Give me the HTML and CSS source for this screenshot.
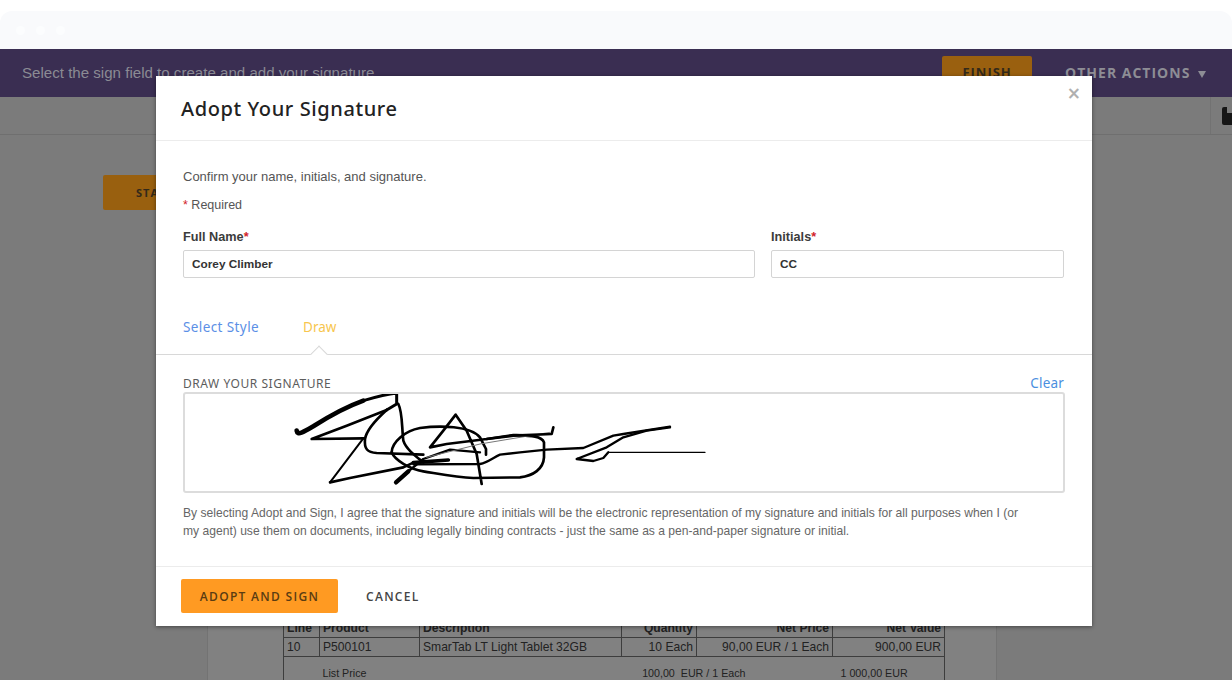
FILE: index.html
```html
<!DOCTYPE html>
<html lang="en">
<head>
    <meta charset="UTF-8">
    <meta name="viewport" content="width=device-width, initial-scale=1.0">
    <title>Adopt Your Signature</title>
    <link rel="stylesheet" href="styles.css">
</head>
<body>
    <div class="window-bar">
        <span class="dot"></span>
        <span class="dot"></span>
        <span class="dot"></span>
    </div>

    <div class="page-shell">
        <div class="action-bar">
            <span class="action-text">Select the sign field to create and add your signature</span>
            <span class="finish-btn">FINISH</span>
            <span class="other-actions">OTHER ACTIONS <span class="caret"></span></span>
        </div>
        <div class="tool-bar">
            <div class="tool-cell">
                <svg class="save-icon" width="18" height="18" viewBox="0 0 18 18">
                    <path d="M2 0h12l4 4v12a2 2 0 0 1-2 2H2a2 2 0 0 1-2-2V2a2 2 0 0 1 2-2z" fill="#161616"/>
                    <path d="M5 0h6v6H5z" fill="#7b7b7b"/>
                </svg>
            </div>
        </div>
        <div class="doc-area">
            <span class="start-tag">START</span>
            <div class="doc-page">
                <table class="items">
                    <tr>
                        <th class="col-line">Line</th>
                        <th class="col-product">Product</th>
                        <th class="col-desc">Description</th>
                        <th class="col-qty num">Quantity</th>
                        <th class="col-price num">Net Price</th>
                        <th class="col-value num">Net Value</th>
                    </tr>
                    <tr>
                        <td>10</td>
                        <td>P500101</td>
                        <td>SmarTab LT Light Tablet 32GB</td>
                        <td class="num">10 Each</td>
                        <td class="num">90,00 EUR / 1 Each</td>
                        <td class="num">900,00 EUR</td>
                    </tr>
                    <tr class="detail">
                        <td></td>
                        <td colspan="2">List Price</td>
                        <td colspan="2" class="detail-price">100,00 &nbsp;EUR / 1 Each</td>
                        <td class="detail-value">1 000,00 EUR</td>
                    </tr>
                </table>
            </div>
        </div>
    </div>

    <div class="sign-dialog">
        <div class="dialog-head">
            <h1>Adopt Your Signature</h1>
            <span class="close-x">×</span>
        </div>
        <div class="dialog-body">
            <p class="intro">Confirm your name, initials, and signature.</p>
            <p class="required"><span class="star">*</span> Required</p>
            <div class="name-fields">
                <div class="field">
                    <label for="fullName">Full Name<span class="star">*</span></label>
                    <input type="text" id="fullName" value="Corey Climber">
                </div>
                <div class="field">
                    <label for="initials">Initials<span class="star">*</span></label>
                    <input type="text" id="initials" value="CC">
                </div>
            </div>
        </div>
        <div class="tabs">
            <span class="tab">Select Style</span>
            <span class="tab active">Draw</span>
        </div>
        <div class="draw-section">
            <div class="draw-head">
                <span class="draw-label">DRAW YOUR SIGNATURE</span>
                <span class="clear">Clear</span>
            </div>
            <div class="sign-pad">
                <svg class="signature" width="440" height="110" viewBox="0 0 1320 330" fill="none" stroke="#000" stroke-linecap="round" stroke-linejoin="round">
                    <path stroke-width="14" d="M50 140 C52 155 70 145 100 127 C150 95 200 68 250 50"/>
                    <path stroke-width="9" d="M250 50 C290 38 320 30 350 27 L350 60 L320 78"/>
                    <path stroke-width="8" d="M320 78 L200 125 L95 165 L250 163"/>
                    <path stroke-width="6" d="M250 163 L150 295"/>
                    <path stroke-width="8" d="M150 295 L210 282 L370 250 L400 236"/>
                    <path stroke-width="8" d="M355 60 C368 85 365 130 370 170 C378 195 405 215 430 235"/>
                    <path stroke-width="8" d="M320 78 C290 105 260 135 255 165 C252 195 262 205 290 207 L430 212"/>
                    <path stroke-width="8" d="M335 205 C335 175 375 140 420 132 C480 124 570 125 600 160 L618 195 L618 212"/>
                    <path stroke-width="8" d="M335 205 C345 230 390 255 430 262 C480 270 530 280 580 282 L720 280 C760 275 790 255 792 220 L792 175 C785 155 750 155 700 153 L620 165 L500 180 L450 190 L490 140 L527 92 L560 140 L590 210 L605 300"/>
                    <path stroke-width="13" d="M348 295 L385 262"/>
                    <path stroke-width="7" d="M385 262 L430 225 L510 197 L600 205"/>
                    <path stroke-width="11" d="M400 236 L505 228"/>
                    <path stroke-width="7" d="M400 241 L600 240 C625 235 640 220 660 212 L720 205 L800 197 L910 192 L1000 155 L1030 150 L1170 128"/>
                    <path stroke="#777" stroke-width="3" d="M440 220 L600 180 L810 145"/>
                    <path stroke-width="8" d="M620 165 L700 155 L815 150 L820 130"/>
                    <path stroke-width="7" d="M1170 130 L1100 140 L1030 160 L980 190 L890 225 L940 231 L970 222 L985 205"/>
                    <path stroke-width="4" d="M985 205 L1275 205"/>
                </svg>
            </div>
            <p class="legal">By selecting Adopt and Sign, I agree that the signature and initials will be the electronic representation of my signature and initials for all purposes when I (or my agent) use them on documents, including legally binding contracts - just the same as a pen-and-paper signature or initial.</p>
        </div>
        <div class="dialog-foot">
            <button type="button" class="adopt-btn">ADOPT AND SIGN</button>
            <button type="button" class="cancel-btn">CANCEL</button>
        </div>
    </div>
</body>
</html>
```

FILE: styles.css
```css
body {
    margin: 0;
    background-color: #fff;
    font-family: "Liberation Sans", Arial, sans-serif;
    color: #333;
}

/* browser bar */
.window-bar {
    height: 38px;
    margin-top: 11px;
    padding-left: 16px;
    display: flex;
    align-items: center;
    gap: 11px;
    background-color: #f9fafc;
    border-radius: 12px 12px 0 0;
}

.dot {
    width: 9px;
    height: 9px;
    border-radius: 50%;
    background-color: #fcfdfe;
}

/* dimmed page */
.page-shell {
    height: 631px;
    display: flex;
    flex-direction: column;
    background-color: #7b7b7b;
    overflow: hidden;
}

.action-bar {
    height: 48px;
    flex-shrink: 0;
    display: flex;
    align-items: center;
    padding: 0 0 2px 22px;
    background-color: #3a2e52;
    box-sizing: border-box;
}

.action-text {
    flex: 1;
    font-size: 15.1px;
    color: #8b8b94;
}

.finish-btn {
    width: 90px;
    height: 33px;
    margin-right: 33px;
    line-height: 33px;
    border-radius: 2px;
    background-color: #9a600f;
    color: #33291a;
    font-family: "Open Sans", sans-serif;
    font-size: 13px;
    font-weight: 700;
    letter-spacing: 1px;
    text-align: center;
}

.other-actions {
    margin-right: 26px;
    font-family: "Open Sans", sans-serif;
    font-size: 14px;
    font-weight: 700;
    letter-spacing: 1px;
    color: #8d8d95;
}

.caret {
    display: inline-block;
    margin-left: 3px;
    border-left: 4px solid transparent;
    border-right: 4px solid transparent;
    border-top: 7px solid #8d8d95;
}

.tool-bar {
    height: 38px;
    flex-shrink: 0;
    display: flex;
    justify-content: flex-end;
    border-bottom: 1px solid #6f6f6f;
    box-sizing: border-box;
}

.tool-cell {
    width: 22px;
    box-sizing: border-box;
    padding: 10px 0 0 11px;
    border-left: 1px solid #727272;
    overflow: hidden;
}

.save-icon {
    display: block;
}

.doc-area {
    flex: 1;
    position: relative;
    padding-left: 207px;
}

.start-tag {
    position: absolute;
    left: 103px;
    top: 40px;
    width: 80px;
    height: 35px;
    padding-left: 33px;
    box-sizing: border-box;
    border-radius: 2px;
    background-color: #99600f;
    color: #33291a;
    font-family: "Open Sans", sans-serif;
    font-size: 11px;
    font-weight: 700;
    letter-spacing: 1px;
    line-height: 35px;
}

.doc-page {
    width: 790px;
    height: 100%;
    box-sizing: border-box;
    padding: 483px 0 0 75px;
    background-color: #818181;
    border-left: 1px solid #737373;
    border-right: 1px solid #737373;
}

.items {
    width: 662px;
    table-layout: fixed;
    border-collapse: collapse;
    font-size: 12.1px;
    color: #222;
}

.items th,
.items td {
    box-sizing: border-box;
    border: 1px solid #3d3d3d;
    padding: 0 3px;
    height: 19px;
    text-align: left;
    white-space: nowrap;
}

.items .num {
    text-align: right;
}

.col-line { width: 36px; }
.col-product { width: 100px; }
.col-desc { width: 202px; }
.col-qty { width: 75px; }
.col-price { width: 136px; }

.items .detail td {
    border-width: 0;
    height: 32px;
    font-size: 10.7px;
}

.items .detail td:first-child {
    border-left: 1px solid #3d3d3d;
}

.items .detail td:last-child {
    border-right: 1px solid #3d3d3d;
}

.items .detail .detail-price {
    padding: 0 87px 0 0;
    text-align: right;
}

.items .detail .detail-value {
    padding-left: 8px;
}

/* dialog */
.sign-dialog {
    position: absolute;
    left: 156px;
    top: 76px;
    width: 936px;
    height: 550px;
    display: flex;
    flex-direction: column;
    background-color: #fff;
    box-shadow: 0 1px 4px rgba(0, 0, 0, 0.45);
}

.dialog-head {
    height: 65px;
    flex-shrink: 0;
    box-sizing: border-box;
    position: relative;
    padding: 19px 0 0 25px;
    border-bottom: 1px solid #ececec;
}

.dialog-head h1 {
    margin: 0;
    font-family: "Noto Sans", sans-serif;
    font-size: 20px;
    font-weight: 500;
    line-height: 27px;
    letter-spacing: 0.6px;
    color: #222;
}

.close-x {
    position: absolute;
    right: 11px;
    top: 5px;
    font-family: "DejaVu Sans", sans-serif;
    font-size: 17px;
    font-weight: 700;
    line-height: 24px;
    color: #b0b0b0;
}

.dialog-body {
    height: 149px;
    flex-shrink: 0;
    box-sizing: border-box;
    padding: 28px 27px 0;
}

.intro,
.required {
    margin: 0;
    font-size: 13px;
    line-height: 15px;
    color: #555;
}

.required {
    margin-top: 14px;
    font-size: 12.5px;
}

.star {
    color: #d2232a;
}

.name-fields {
    display: grid;
    grid-template-columns: 572px 293px;
    gap: 16px;
    margin-top: 17px;
}

.field label {
    display: block;
    margin-bottom: 5px;
    font-size: 12.7px;
    line-height: 15px;
    font-weight: 700;
    color: #3c3c3c;
}

.field input {
    display: block;
    width: 100%;
    height: 28px;
    box-sizing: border-box;
    padding: 0 8px;
    border: 1px solid #d4d4d4;
    border-radius: 2px;
    font-family: "Liberation Sans", Arial, sans-serif;
    font-size: 11.8px;
    font-weight: 700;
    color: #333;
}

.tabs {
    height: 65px;
    flex-shrink: 0;
    box-sizing: border-box;
    position: relative;
    display: flex;
    gap: 44px;
    padding: 28px 27px 0;
    border-bottom: 1px solid #d8d8d8;
}

.tab {
    font-family: "Noto Sans", sans-serif;
    font-size: 13.5px;
    line-height: 18px;
    letter-spacing: 0.4px;
    color: #5b8fe6;
}

.tab.active {
    color: #f7c64e;
    letter-spacing: 0;
}

/* little notch under the active tab */
.tabs::after {
    content: "";
    position: absolute;
    left: 157px;
    bottom: -6px;
    width: 11px;
    height: 11px;
    background-color: #fff;
    border-left: 1px solid #d8d8d8;
    border-top: 1px solid #d8d8d8;
    transform: rotate(45deg);
}

.draw-section {
    flex: 1;
    padding: 0 27px;
}

.draw-head {
    display: flex;
    justify-content: space-between;
    height: 37px;
    box-sizing: border-box;
    padding-top: 21px;
    line-height: 15px;
}

.draw-label {
    font-family: "Noto Sans", sans-serif;
    font-size: 12px;
    letter-spacing: 0.55px;
    color: #5c5c5c;
}

.clear {
    margin-right: 1px;
    font-family: "Noto Sans", sans-serif;
    font-size: 13.5px;
    letter-spacing: 0.2px;
    color: #4a8fe0;
}

.sign-pad {
    height: 101px;
    box-sizing: border-box;
    position: relative;
    border: 2px solid #dcdcdc;
    border-radius: 3px;
    overflow: hidden;
}

.signature {
    position: absolute;
    left: 95px;
    top: -10px;
}

.legal {
    margin: 11px 45px 0 0;
    font-size: 12.1px;
    line-height: 18px;
    color: #666;
}

.dialog-foot {
    height: 60px;
    flex-shrink: 0;
    box-sizing: border-box;
    display: flex;
    align-items: flex-start;
    gap: 28px;
    padding: 12px 25px 0;
    border-top: 1px solid #ececec;
}

.dialog-foot button {
    height: 34px;
    padding: 0;
    border: none;
    background: none;
    font-family: "Open Sans", sans-serif;
    font-size: 12px;
    font-weight: 600;
    letter-spacing: 1.3px;
    cursor: pointer;
}

.dialog-foot .adopt-btn {
    width: 157px;
    border-radius: 2px;
    background-color: #ff9a22;
    color: #5a3c12;
}

.dialog-foot .cancel-btn {
    color: #444;
}
```
